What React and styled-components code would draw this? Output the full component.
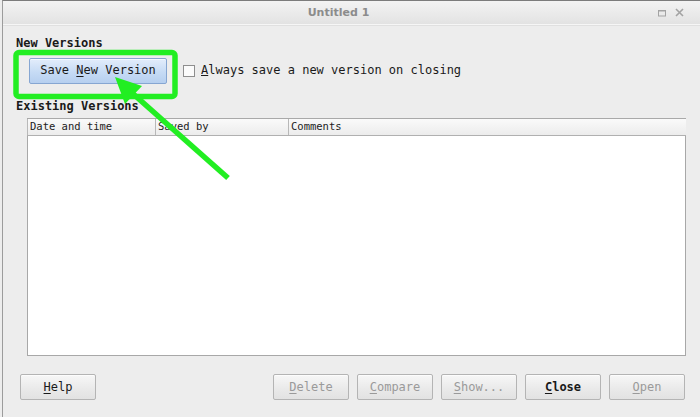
import React from "react";
import styled, { createGlobalStyle } from "styled-components";

const Global = createGlobalStyle`
  html, body { margin: 0; padding: 0; background: #ededed; }
  body { width: 700px; height: 417px; overflow: hidden; }
`;

const Window = styled.div`
  position: relative;
  margin-left: 2px;
  width: 698px;
  height: 417px;
  box-sizing: border-box;
  border-left: 1px solid #9c9c9c;
  border-top: 1px solid #7c7c7c;
  background: #ededed;
  display: flex;
  flex-direction: column;
  font-family: "DejaVu Sans Mono", monospace;
  font-size: 12px;
  color: #1a1a1a;
`;

const TitleBar = styled.div`
  height: 23px;
  display: flex;
  align-items: center;
  padding-left: 16px;
  background: linear-gradient(#f3f3f3, #e6e6e6 80%, #e2e2e2);
  border-bottom: 1px solid #f6f6f6;
  box-shadow: 0 1px 0 #e0e0e0;
`;

const Title = styled.div`
  flex: 1;
  text-align: center;
  font-family: "DejaVu Sans", sans-serif;
  font-weight: bold;
  font-size: 11px;
  color: #8c8c8c;
`;

const Controls = styled.div`
  display: flex;
  align-items: center;
  gap: 9px;
  width: 34px;
  margin-right: 8px;
`;

const Content = styled.div`
  flex: 1;
  display: flex;
  flex-direction: column;
  padding: 0 13px 0 13px;
`;

const SectionLabel = styled.div`
  font-weight: bold;
  line-height: 14px;
  height: 14px;
  margin-top: ${(p) => p.$top}px;
`;

const VersionRow = styled.div`
  display: flex;
  align-items: center;
  margin-top: 8px;
  padding-left: 13px;
  height: 25px;
`;

const Button = styled.button`
  box-sizing: border-box;
  height: 26px;
  width: ${(p) => p.$w || 76}px;
  padding: 0 0 1px 0;
  font-family: "DejaVu Sans Mono", monospace;
  font-size: 12px;
  font-weight: ${(p) => (p.$bold ? "bold" : "normal")};
  color: ${(p) => (p.disabled ? "#9a9a9a" : "#1a1a1a")};
  border-radius: 2px;
  border: 1px solid ${(p) => (p.$primary ? "#86a6d2" : "#b4b4b4")};
  background: ${(p) =>
    p.$primary
      ? "linear-gradient(#e3edfb, #c6dbf5 55%, #b6cfef)"
      : "linear-gradient(#f7f7f7, #e9e9e9 60%, #e2e2e2)"};
  box-shadow: inset 0 1px 0 rgba(255,255,255,0.7);
  u { text-decoration-thickness: 1px; text-underline-offset: 2px; }
`;

const CheckWrap = styled.label`
  display: flex;
  align-items: center;
  margin-left: 16px;
  gap: 6px;
  padding-bottom: 2px;
`;

const CheckBox = styled.span`
  box-sizing: border-box;
  width: 12px;
  height: 12px;
  margin-top: 2px;
  border: 1px solid #8e8e8e;
  background: #fbfbfb;
`;

const Table = styled.div`
  margin-top: 5px;
  margin-left: 11px;
  width: 659px;
  display: flex;
  flex-direction: column;
`;

const HeaderRow = styled.div`
  display: grid;
  grid-template-columns: 128px 133px 1fr;
  height: 18px;
  box-sizing: border-box;
  border-top: 1px solid #a9a9a9;
  border-bottom: 1px solid #b0b0b0;
  background: linear-gradient(#fafafa, #ececec);
`;

const HeaderCell = styled.div`
  font-size: 10.5px;
  line-height: 14px;
  padding-left: 2px;
  border-left: 1px solid #b8b8b8;
  color: #222;
`;

const TableBody = styled.div`
  height: 219px;
  background: #ffffff;
  border: 1px solid #a8a8a8;
  border-top: none;
`;

const ButtonBar = styled.div`
  display: flex;
  align-items: center;
  margin-top: 18px;
  margin-left: 4px;
  margin-right: 2px;
  gap: 8px;
`;

const Spacer = styled.div`
  flex: 1;
`;

const Overlay = styled.svg`
  position: absolute;
  left: -3px;
  top: -1px;
  pointer-events: none;
`;

export default function App() {
  return (
    <>
      <Global />
      <Window>
        <TitleBar>
          <Title>Untitled 1</Title>
          <Controls>
            <svg width="8" height="8" viewBox="0 0 8 8">
              <rect x="0.5" y="1.5" width="7" height="5.5" fill="none" stroke="#a3a3a3" strokeWidth="1" />
              <line x1="0.5" y1="2" x2="7.5" y2="2" stroke="#a3a3a3" strokeWidth="1" />
            </svg>
            <svg width="9" height="9" viewBox="0 0 9 9">
              <path d="M1 1 L8 8 M8 1 L1 8" stroke="#a3a3a3" strokeWidth="1.6" />
            </svg>
          </Controls>
        </TitleBar>
        <Content>
          <SectionLabel $top={11}>New Versions</SectionLabel>
          <VersionRow>
            <Button $primary $w={138}>
              Save <u>N</u>ew Version
            </Button>
            <CheckWrap>
              <CheckBox />
              <span>
                <u>A</u>lways save a new version on closing
              </span>
            </CheckWrap>
          </VersionRow>
          <SectionLabel $top={16}>Existing Versions</SectionLabel>
          <Table>
            <HeaderRow>
              <HeaderCell>Date and time</HeaderCell>
              <HeaderCell>Saved by</HeaderCell>
              <HeaderCell>Comments</HeaderCell>
            </HeaderRow>
            <TableBody />
          </Table>
          <ButtonBar>
            <Button>
              <u>H</u>elp
            </Button>
            <Spacer />
            <Button disabled>
              <u>D</u>elete
            </Button>
            <Button disabled>
              <u>C</u>ompare
            </Button>
            <Button disabled>
              <u>S</u>how...
            </Button>
            <Button $bold>
              <u>C</u>lose
            </Button>
            <Button disabled>
              <u>O</u>pen
            </Button>
          </ButtonBar>
        </Content>
        <Overlay width="700" height="417" viewBox="0 0 700 417">
          <rect x="16" y="52.5" width="159" height="44" rx="3" fill="none" stroke="#22ee22" strokeWidth="5.5" />
          <line x1="228" y1="178" x2="131" y2="92" stroke="#22ee22" strokeWidth="5.5" />
          <polygon points="115,77 142,86 125,104" fill="#22ee22" />
        </Overlay>
      </Window>
    </>
  );
}
